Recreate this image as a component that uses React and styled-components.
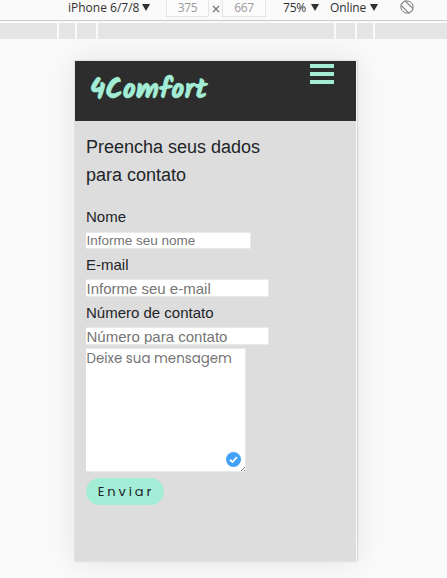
import React from 'react';
import styled, { createGlobalStyle } from 'styled-components';

const Global = createGlobalStyle`
  * { box-sizing: border-box; }
  body { margin: 0; background: #fafafa; overflow: hidden; }
`;

const Page = styled.div`
  width: 447px;
  height: 578px;
  overflow: hidden;
  background: #fafafa;
  font-family: "Liberation Sans", Arial, sans-serif;
`;

const Toolbar = styled.div`
  display: flex;
  height: 21px;
  padding-left: 68px;
  border-bottom: 1px solid #c9cdc9;
  font: 12px/16px "Open Sans", "Noto Sans", sans-serif;
  color: #303030;
  white-space: nowrap;
`;

const Choice = styled.div`
  display: flex;
  justify-content: space-between;
  width: ${p => p.$width}px;
  margin-left: ${p => p.$gap || 0}px;
  letter-spacing: ${p => p.$spacing || 0}px;
`;

const Arrow = styled.i`
  width: 0;
  height: 0;
  margin: 4px -1px 0 0;
  border: solid transparent;
  border-width: 7px 4px 0;
  border-top-color: #303030;
`;

const Dimension = styled.div`
  width: ${p => p.$width}px;
  height: 17px;
  margin-left: ${p => p.$gap}px;
  border: 1px solid #e6e6e6;
  border-top: 0;
  background: #fcfcfc;
  color: #9b9b9b;
  text-align: center;
  letter-spacing: -0.4px;
`;

const Times = styled.svg`
  width: 8px;
  height: 8px;
  margin: 5px 0 0 3px;
`;

const Rotate = styled.svg`
  width: 16px;
  height: 16px;
  margin: -1px 0 0 22px;
`;

const Rulers = styled.div`
  display: flex;
  gap: 2px;
  height: 18px;
  padding-top: 2px;
`;

const Ruler = styled.div`
  width: ${p => p.$width}px;
  height: 16px;
  background: #e5e5e5;
`;

const Device = styled.main`
  width: 283px;
  height: 502px;
  margin: 21px 0 0 74px;
  border: 1px solid #e1e4e1;
  border-right-color: #f8f8f8;
  background: #ddd;
  box-shadow: 0 0 30px rgba(0, 0, 0, 0.09), 1px 0 1px rgba(0, 0, 0, 0.1);
`;

const Header = styled.header`
  display: flex;
  justify-content: space-between;
  height: 60px;
  padding: 0 22px 0 15px;
  background: #2d2d2d;
`;

const Brand = styled.div`
  margin-top: 13px;
  font: 700 28px/34px Kalam, Lato, sans-serif;
  letter-spacing: 0.2px;
  -webkit-text-stroke: 0.7px #a3edd6;
  color: #a3edd6;
`;

const Menu = styled.div`
  display: grid;
  gap: 4px;
  width: 24px;
  height: 20px;
  margin-top: 3px;
`;

const MenuBar = styled.span`
  height: 4px;
  background: #a3edd6;
`;

const Form = styled.div`
  display: flex;
  flex-direction: column;
  align-items: flex-start;
  padding: 12px 11px 0;
`;

const Title = styled.h1`
  width: 210px;
  margin: 0 0 16px;
  font-size: 18px;
  font-weight: 400;
  line-height: 28px;
  color: #212529;
`;

const Label = styled.label`
  height: 24px;
  padding-top: 1px;
  font-size: 15px;
  line-height: 22px;
  color: #212529;
`;

const Input = styled.input`
  width: ${p => p.$width}px;
  height: ${p => p.$height}px;
  margin: ${p => p.$margin};
  padding: 0;
  border: 1px solid #e9e9e9;
  border-left-width: 0;
  outline: 0;
  background: #fff;
  font: ${p => p.$size}px "Liberation Sans", Arial, sans-serif;
  text-indent: 0.5px;
  &::placeholder { color: #757575; opacity: 1; }
`;

const MessageBox = styled.div`
  display: flex;
  position: relative;
  width: 160px;
  height: 124px;
`;

const Message = styled.textarea`
  width: 160px;
  height: 124px;
  padding: 0;
  border: 1px solid #e9e9e9;
  border-left-width: 0;
  outline: 0;
  resize: none;
  background: #fff;
  font: 13.4px/20px Poppins, "Lato", sans-serif;
  text-indent: 0.5px;
  &::placeholder { color: #757575; opacity: 1; }
`;

const Check = styled.svg`
  position: absolute;
  right: 5px;
  bottom: 5px;
  width: 15px;
  height: 15px;
`;

const Grip = styled.svg`
  position: absolute;
  right: 1px;
  bottom: 1px;
  width: 4px;
  height: 4px;
`;

const Submit = styled.button`
  width: 78px;
  height: 27px;
  margin-top: 6px;
  padding: 0 0 0 2px;
  border: 0;
  border-radius: 14px;
  background: #a3edd6;
  font: 13px/27px Poppins, Lato, sans-serif;
  letter-spacing: 2.9px;
  color: #212529;
`;

export default function App() {
  return (
    <Page>
      <Global />
      <Toolbar>
        <Choice $width={81}>iPhone 6/7/8<Arrow /></Choice>
        <Dimension $width={43} $gap={17}>375</Dimension>
        <Times viewBox="0 0 8 8"><path d="M1 1L7 7M7 1L1 7" stroke="#777" strokeWidth="1.3" /></Times>
        <Dimension $width={44} $gap={2}>667</Dimension>
        <Choice $width={35} $gap={17} $spacing={-0.2}>75%<Arrow /></Choice>
        <Choice $width={47} $gap={12} $spacing={-0.1}>Online<Arrow /></Choice>
        <Rotate viewBox="0 0 16 16" fill="none" stroke="#777" strokeWidth="1">
          <rect x="5" y="2" width="6" height="12" rx="1" transform="rotate(-45 8 8)" />
          <path d="M6 2.2A6.2 6.2 0 0 1 14 9M10 13.8A6.2 6.2 0 0 1 2 7" />
        </Rotate>
      </Toolbar>
      <Rulers>
        {[57, 16, 19, 236, 19, 16, 72].map((width, i) => <Ruler key={i} $width={width} />)}
      </Rulers>
      <Device>
        <Header>
          <Brand>4Comfort</Brand>
          <Menu><MenuBar /><MenuBar /><MenuBar /></Menu>
        </Header>
        <Form>
          <Title>Preencha seus dados para contato</Title>
          <Label>Nome</Label>
          <Input $width={165} $height={17} $margin="3px 0 4px" $size={13.5} placeholder="Informe seu nome" />
          <Label>E-mail</Label>
          <Input $width={183} $height={18} $margin="2px 0 4px" $size={15} placeholder="Informe seu e-mail" />
          <Label>Número de contato</Label>
          <Input $width={183} $height={18} $margin="2px 0 3px" $size={15} placeholder="Número para contato" />
          <MessageBox>
            <Message placeholder="Deixe sua mensagem" />
            <Check viewBox="0 0 15 15">
              <circle cx="7.5" cy="7.5" r="7.5" fill="#42a1f8" />
              <path d="M4 7.8L6.5 10L11 5" fill="none" stroke="#fff" strokeWidth="1.8" />
            </Check>
            <Grip viewBox="0 0 4 4"><path d="M0 4L4 0M3 4L4 3" stroke="#555" strokeWidth="0.8" /></Grip>
          </MessageBox>
          <Submit>Enviar</Submit>
        </Form>
      </Device>
    </Page>
  );
}
